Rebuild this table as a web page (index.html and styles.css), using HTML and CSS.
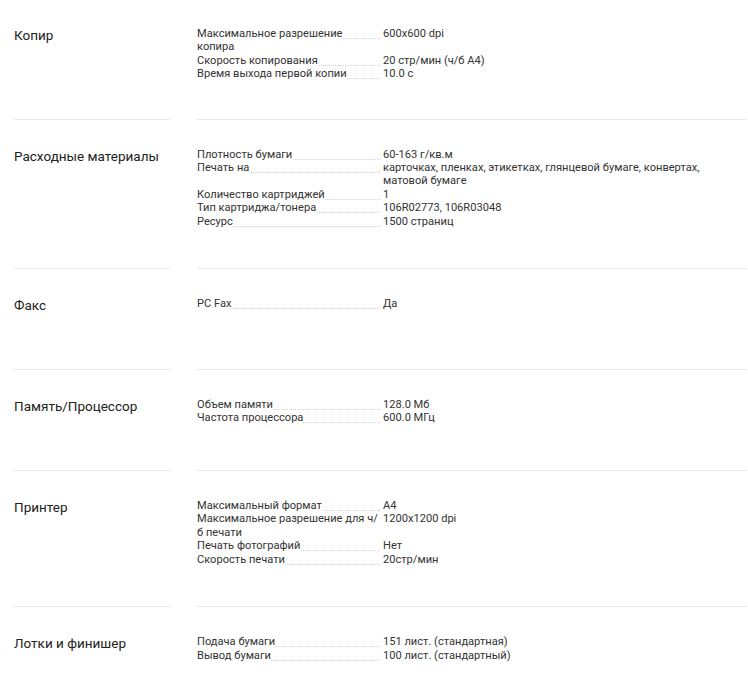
FILE: index.html
```html
<!DOCTYPE html>
<html lang="ru">
<head>
<meta charset="utf-8">
<title>Характеристики</title>
<link rel="stylesheet" href="styles.css">
</head>
<body>
<div class="specs">
  <section class="group">
    <h3 class="group-title">Копир</h3>
    <dl class="group-list">
      <dt><span>Максимальное разрешение копира</span></dt><dd>600x600 dpi</dd>
      <dt><span>Скорость копирования</span></dt><dd>20 стр/мин (ч/б А4)</dd>
      <dt><span>Время выхода первой копии</span></dt><dd>10.0 с</dd>
    </dl>
  </section>
  <section class="group">
    <h3 class="group-title">Расходные материалы</h3>
    <dl class="group-list">
      <dt><span>Плотность бумаги</span></dt><dd>60-163 г/кв.м</dd>
      <dt><span>Печать на</span></dt><dd>карточках, пленках, этикетках, глянцевой бумаге, конвертах, матовой бумаге</dd>
      <dt><span>Количество картриджей</span></dt><dd>1</dd>
      <dt><span>Тип картриджа/тонера</span></dt><dd>106R02773, 106R03048</dd>
      <dt><span>Ресурс</span></dt><dd>1500 страниц</dd>
    </dl>
  </section>
  <section class="group">
    <h3 class="group-title">Факс</h3>
    <dl class="group-list">
      <dt><span>PC Fax</span></dt><dd>Да</dd>
    </dl>
  </section>
  <section class="group">
    <h3 class="group-title">Память/Процессор</h3>
    <dl class="group-list">
      <dt><span>Объем памяти</span></dt><dd>128.0 Мб</dd>
      <dt><span>Частота процессора</span></dt><dd>600.0 МГц</dd>
    </dl>
  </section>
  <section class="group">
    <h3 class="group-title">Принтер</h3>
    <dl class="group-list">
      <dt><span>Максимальный формат</span></dt><dd>A4</dd>
      <dt><span>Максимальное разрешение для ч/б печати</span></dt><dd>1200x1200 dpi</dd>
      <dt><span>Печать фотографий</span></dt><dd>Нет</dd>
      <dt><span>Скорость печати</span></dt><dd>20стр/мин</dd>
    </dl>
  </section>
  <section class="group">
    <h3 class="group-title">Лотки и финишер</h3>
    <dl class="group-list">
      <dt><span>Подача бумаги</span></dt><dd>151 лист. (стандартная)</dd>
      <dt><span>Вывод бумаги</span></dt><dd>100 лист. (стандартный)</dd>
    </dl>
  </section>
</div>
</body>
</html>
```
FILE: styles.css
```css
html, body {
  margin: 0;
  padding: 0;
  background: #fff;
}
body {
  font-family: Roboto, "Liberation Sans", Arial, sans-serif;
  color: #333;
}
.specs {
  padding: 0 2px 0 14px;
}
.group {
  display: grid;
  grid-template-columns: 156px 549px;
  column-gap: 27px;
  min-height: 101px;
}
.group-title,
.group-list {
  margin: 0;
  padding: 28px 0 40px;
  border-bottom: 1px solid #e9e9e9;
}
.group:first-child .group-title,
.group:first-child .group-list {
  padding-top: 27px;
  padding-bottom: 38px;
}
.group-title {
  font-size: 13.5px;
  font-weight: 400;
  line-height: 16px;
  color: #222;
}
.group-list {
  display: grid;
  grid-template-columns: 183px minmax(0, 345px);
  column-gap: 3px;
  align-content: start;
  font-size: 11.1px;
  line-height: 13.4px;
}
.group-list dt {
  background-image: repeating-linear-gradient(to right, #d4d4d4 0 1px, transparent 1px 2px);
  background-size: 100% 1px;
  background-position: 0 11px;
  background-repeat: no-repeat;
}
.group-list dt span {
  background: #fff;
}
.group-list dd {
  margin: 0;
}
```
